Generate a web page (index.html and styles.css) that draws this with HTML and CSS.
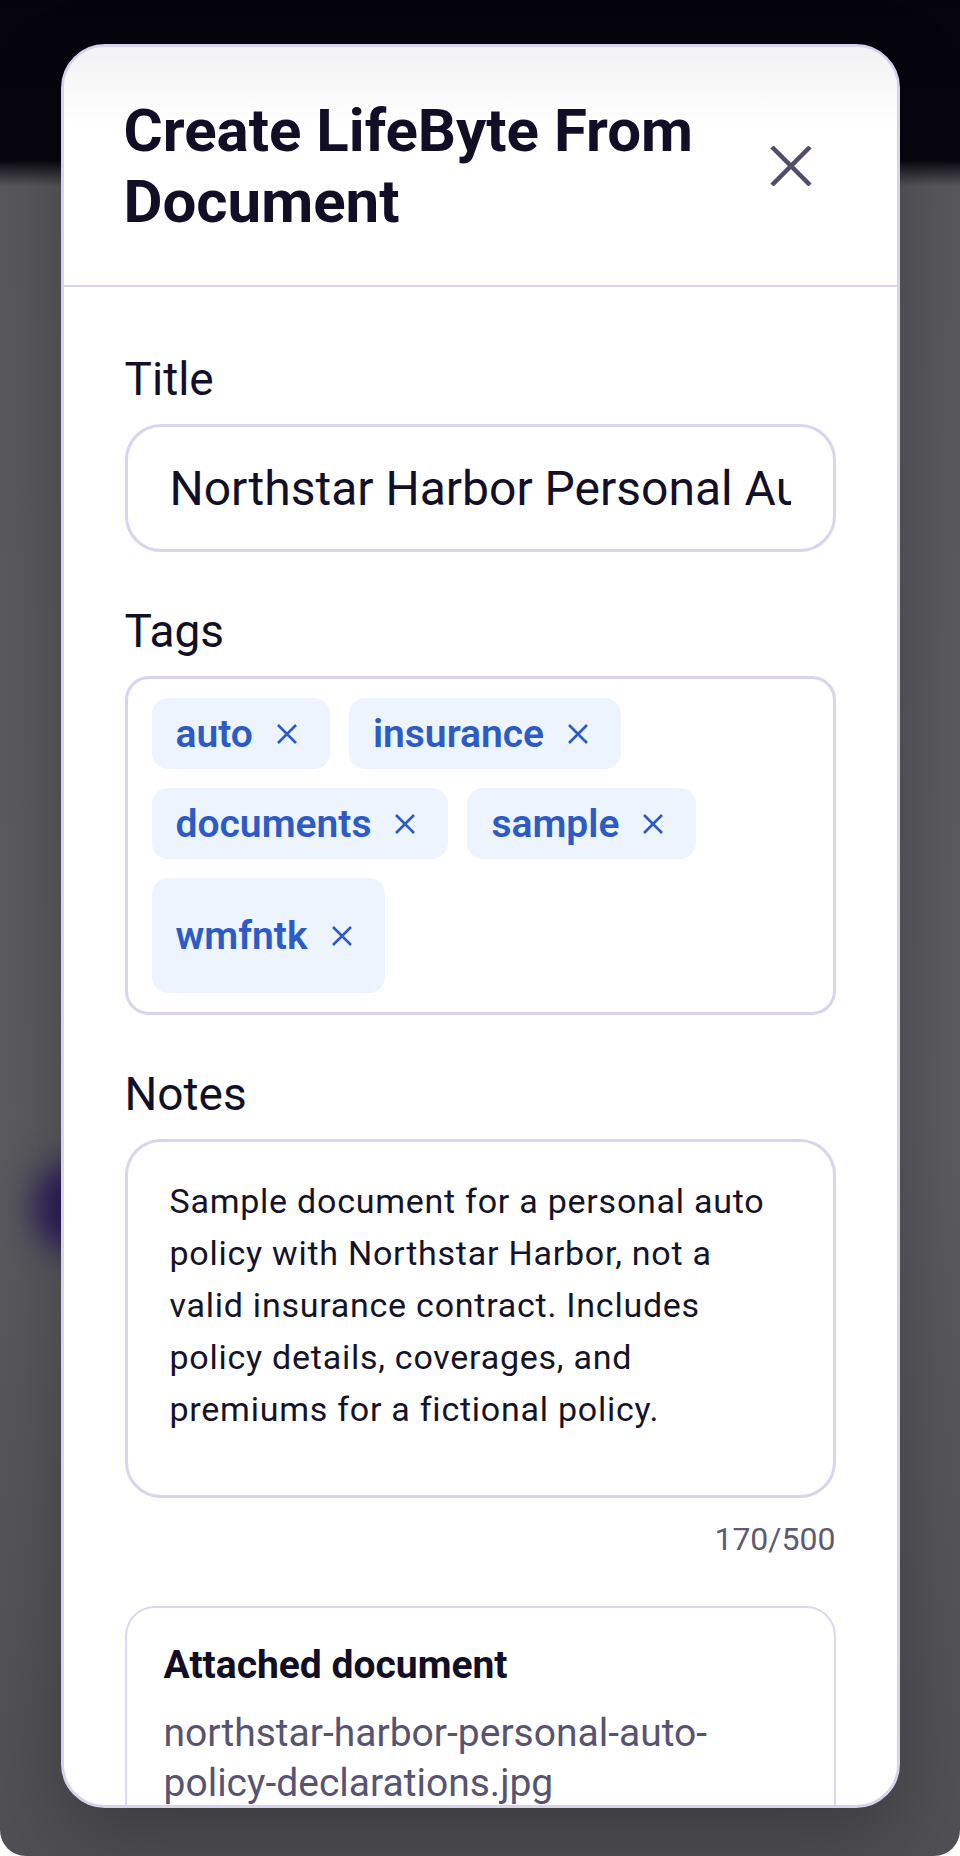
FILE: index.html
```html
<!DOCTYPE html>
<html lang="en">

<head>
  <meta charset="UTF-8">
  <meta name="viewport" content="width=device-width, initial-scale=1.0">
  <title>Create LifeByte From Document</title>
  <link rel="stylesheet" href="styles.css">
</head>

<body>
  <div class="backdrop">
    <div class="blob"></div>

    <div class="modal" role="dialog" aria-labelledby="modalTitle">
      <header class="modal-head">
        <h2 id="modalTitle">Create LifeByte From Document</h2>
        <button class="close-btn" aria-label="Close">
          <svg viewBox="0 0 42 40" width="42" height="40">
            <path d="M2 1 L40 39 M40 1 L2 39" stroke="currentColor" stroke-width="4.5" fill="none" />
          </svg>
        </button>
      </header>

      <div class="modal-body">
        <div class="field">
          <label for="inputTitle">Title</label>
          <input type="text" id="inputTitle" class="text-input"
            value="Northstar Harbor Personal Auto Policy Declarations" />
        </div>

        <div class="field">
          <label>Tags</label>
          <div class="tag-box">
            <span class="chip">auto<button class="chip-x" aria-label="Remove auto"><svg viewBox="0 0 20 20" width="20" height="20"><path d="M1 1 L19 19 M19 1 L1 19" /></svg></button></span>
            <span class="chip">insurance<button class="chip-x" aria-label="Remove insurance"><svg viewBox="0 0 20 20" width="20" height="20"><path d="M1 1 L19 19 M19 1 L1 19" /></svg></button></span>
            <span class="chip">documents<button class="chip-x" aria-label="Remove documents"><svg viewBox="0 0 20 20" width="20" height="20"><path d="M1 1 L19 19 M19 1 L1 19" /></svg></button></span>
            <span class="chip">sample<button class="chip-x" aria-label="Remove sample"><svg viewBox="0 0 20 20" width="20" height="20"><path d="M1 1 L19 19 M19 1 L1 19" /></svg></button></span>
            <span class="chip">wmfntk<button class="chip-x" aria-label="Remove wmfntk"><svg viewBox="0 0 20 20" width="20" height="20"><path d="M1 1 L19 19 M19 1 L1 19" /></svg></button></span>
            <input type="text" class="tag-input" aria-label="Add tag" />
          </div>
        </div>

        <div class="field notes-field">
          <label for="inputNotes">Notes</label>
          <textarea id="inputNotes" class="notes">Sample document for a personal auto policy with Northstar Harbor, not a valid insurance contract. Includes policy details, coverages, and premiums for a fictional policy.</textarea>
          <div class="counter">170/500</div>
        </div>

        <div class="attached">
          <h3>Attached document</h3>
          <p class="file-name">northstar-harbor-personal-auto-policy-declarations.jpg</p>
        </div>
      </div>
    </div>
  </div>
</body>

</html>
```

FILE: styles.css
```css
*,
html {
  margin: 0;
  padding: 0;
  box-sizing: border-box;
}

body {
  font-family: Roboto, "Liberation Sans", sans-serif;
  background: #fff;
  color: #120f26;
}

.backdrop {
  position: relative;
  height: 1856px;
  overflow: hidden;
  border-radius: 0 0 26px 26px;
  background: linear-gradient(#05040c 0, #07060f 160px, #58585d 186px, #5b5b60 60%, #4f4f54 100%);
  padding-top: 44px;
}

/* blurred thing behind the dialog */
.blob {
  position: absolute;
  left: 34px;
  top: 1162px;
  width: 80px;
  height: 90px;
  border-radius: 50%;
  background: #2a1b5a;
  filter: blur(16px);
}

.modal {
  position: relative;
  width: 839px;
  height: 1764px;
  margin: 0 auto;
  background: #fff;
  border: 3px solid #d8d3ec;
  border-radius: 44px;
  overflow: hidden;
  display: flex;
  flex-direction: column;
  box-shadow: 0 30px 80px rgba(0, 0, 0, 0.25);
}

.modal-head {
  display: flex;
  align-items: center;
  justify-content: space-between;
  padding: 48px 62px 48px 60px;
  border-bottom: 2px solid #d9d5ec;
  background: linear-gradient(#f2f2f4, #fff 80px);
}

.modal-head h2 {
  font-size: 60px;
  line-height: 71px;
  font-weight: 700;
  color: #110e25;
  max-width: 620px;
}

.close-btn {
  width: 60px;
  height: 60px;
  margin-right: 14px;
  border: none;
  background: none;
  color: #524d6c;
  display: flex;
  align-items: center;
  justify-content: center;
  cursor: pointer;
}

.modal-body {
  flex: 1;
  overflow: hidden;
  padding: 65px 61px 0 61px;
}

.field {
  margin-bottom: 52px;
}

.field label {
  display: block;
  font-size: 46px;
  line-height: 55px;
  margin-bottom: 17px;
  color: #120f26;
}

.text-input {
  width: 100%;
  height: 128px;
  border: 3px solid #d9d5ec;
  border-radius: 36px;
  padding: 0 42px;
  font-family: inherit;
  font-size: 48px;
  color: #120f26;
  outline: none;
  background: #fff;
}

.tag-box {
  display: flex;
  flex-wrap: wrap;
  gap: 19px;
  padding: 19px 24px;
  border: 3px solid #d9d5ec;
  border-radius: 24px;
}

.chip {
  display: flex;
  align-items: center;
  min-height: 71px;
  padding: 0 23px 0 24px;
  background: #edf4fd;
  border-radius: 16px;
  color: #2c5bc6;
  font-size: 39px;
  font-weight: 600;
}

.chip-x {
  width: 40px;
  height: 40px;
  margin-left: 14px;
  border: none;
  background: none;
  display: flex;
  align-items: center;
  justify-content: center;
  cursor: pointer;
}

.chip-x path {
  stroke: #2c5bc6;
  stroke-width: 2.6;
  fill: none;
}

.tag-input {
  flex: 1;
  min-width: 300px;
  height: 115px;
  border: none;
  outline: none;
  background: transparent;
  font-family: inherit;
  font-size: 39px;
}

.notes-field {
  margin-bottom: 48px;
}

.notes {
  display: block;
  width: 100%;
  height: 359px;
  border: 3px solid #d9d5ec;
  border-radius: 36px;
  padding: 33px 60px 30px 42px;
  font-family: inherit;
  font-size: 34px;
  letter-spacing: 0.75px;
  line-height: 52px;
  color: #15132a;
  resize: none;
  overflow: hidden;
  outline: none;
}

.counter {
  margin-top: 22px;
  text-align: right;
  font-size: 32px;
  line-height: 38px;
  color: #5d5a72;
}

.attached {
  border: 2px solid #dcd8ee;
  border-radius: 30px;
  padding: 34px 37px;
}

.attached h3 {
  font-size: 39px;
  line-height: 46px;
  font-weight: 700;
  color: #110e25;
  margin-bottom: 20px;
}

.file-name {
  font-size: 39px;
  line-height: 50px;
  color: #575371;
}
```
